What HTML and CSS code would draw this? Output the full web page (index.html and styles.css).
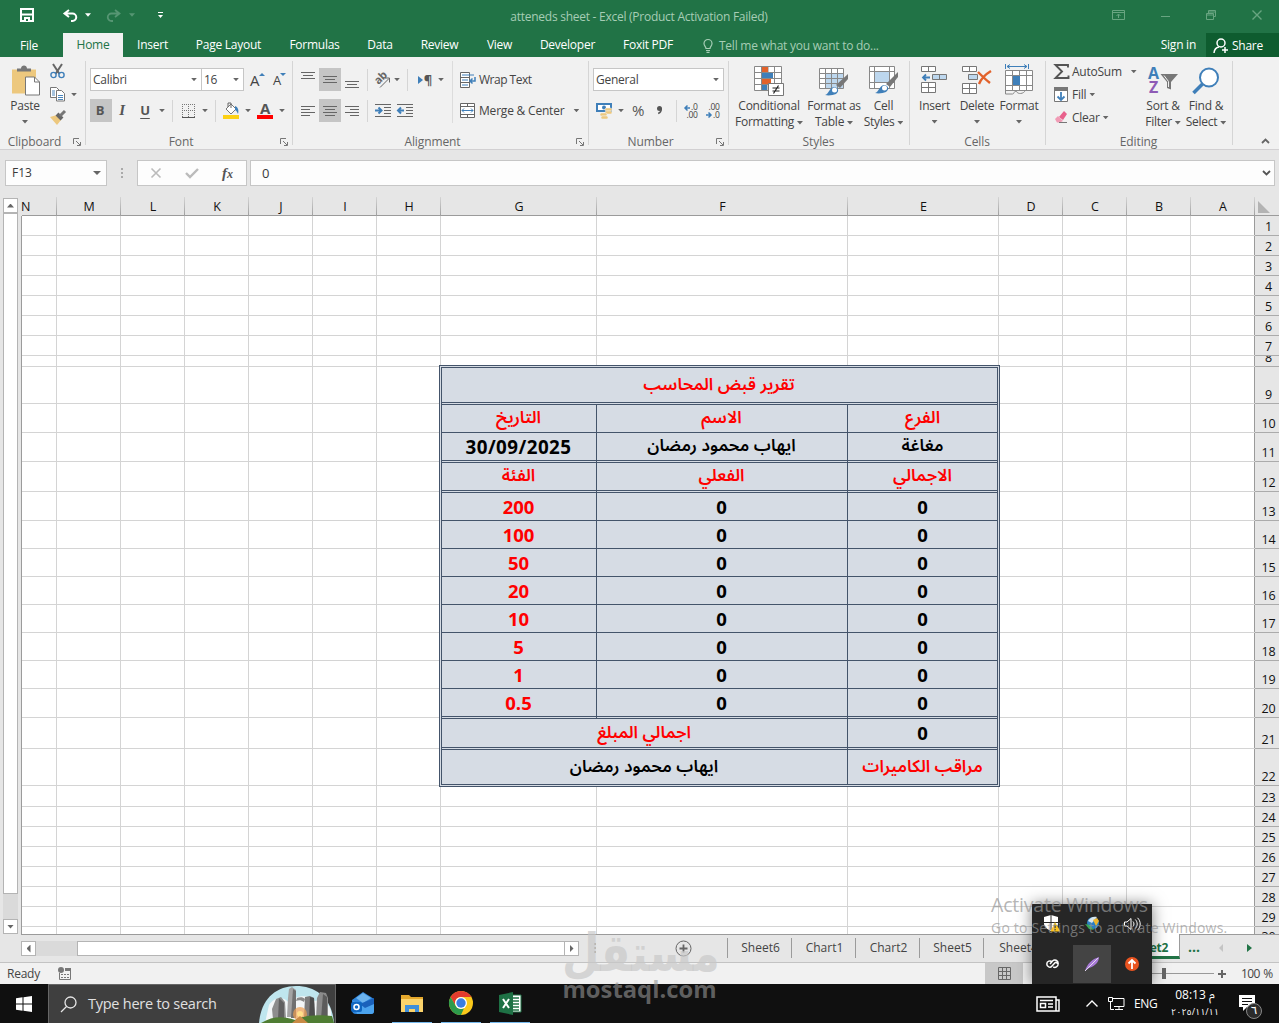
FILE: index.html
```html
<!DOCTYPE html>
<html lang="en">
<head>
  <meta charset="UTF-8" />
  <meta name="viewport" content="width=device-width, initial-scale=1.0"/>
  <title>atteneds sheet - Excel</title>
  <link rel="stylesheet" href="styles.css">
</head>
<body>
<div class="app">

  <!-- title bar -->
  <header class="titlebar">
    <div class="quick">
      <svg width="14" height="14" viewBox="0 0 14 14"><path d="M1 1h12v12H1z" fill="none" stroke="#fff" stroke-width="2"/><path d="M2 6.500h10" stroke="#fff" stroke-width="2"/><path d="M4 9h6v4H4z" fill="#fff"/><path d="M6 11h2v2H6z" fill="#217346"/></svg>
      <svg class="undo" width="15" height="13" viewBox="0 0 15 13"><path d="M6 1L1.500 4.500L6 8M2 4.500h7.500a3.500 3.500 0 0 1 0 7.500H8" fill="none" stroke="#fff" stroke-width="2"/></svg>
      <i class="caret white"></i>
      <svg class="redo" width="15" height="13" viewBox="0 0 15 13"><path d="M9 1l4.500 3.500L9 8M13 4.500H5.500a3.500 3.500 0 0 0 0 7.500H7" fill="none" stroke="#569673" stroke-width="1.800"/></svg>
      <i class="caret faded"></i>
      <svg class="more" width="5" height="6" viewBox="0 0 5 6"><path d="M0 0.500h5" stroke="#fff"/><path d="M0 3h5L2.500 6z" fill="#fff"/></svg>
    </div>
    <div class="doc-title">atteneds sheet - Excel (Product Activation Failed)</div>
    <div class="win-buttons">
      <svg width="13" height="10" viewBox="0 0 13 10" fill="none" stroke="#68a581"><path d="M.5.5h12v9H.5zM.5 2.500h12M6.500 8V4.500M4.500 6l2-2 2 2"/></svg>
      <svg width="9" height="10" viewBox="0 0 9 10"><path d="M0 6.500h9" stroke="#68a581"/></svg>
      <svg width="10" height="10" viewBox="0 0 10 10" fill="none" stroke="#68a581"><path d="M.5 3.500h7v6h-7zM.5 5h7M2.500 3V.500h7v6H8M2.500 2h7"/></svg>
      <svg width="10" height="10" viewBox="0 0 10 10"><path d="M.5.5l9 9M9.500.5l-9 9" stroke="#68a581" stroke-width="1.400"/></svg>
    </div>
  </header>

  <nav class="tabs">
    <span class="file">File</span>
    <span class="active">Home</span>
    <span>Insert</span>
    <span>Page Layout</span>
    <span>Formulas</span>
    <span>Data</span>
    <span>Review</span>
    <span>View</span>
    <span>Developer</span>
    <span>Foxit PDF</span>
    <span class="tell">
      <svg width="10" height="14" viewBox="0 0 10 14" fill="none" stroke="#a6cdb5" stroke-width="1.200"><path d="M3 9.500C3 7.500 1 7 1 4.500a4 4 0 0 1 8 0C9 7 7 7.500 7 9.500zM3 11.500h4M3.500 13.300h3"/></svg>
      Tell me what you want to do...
    </span>
    <span class="signin">Sign in</span>
    <span class="share">
      <svg width="16" height="16" viewBox="0 0 16 16" fill="none" stroke="#fff" stroke-width="1.500"><circle cx="8" cy="5" r="4"/><path d="M1 15c.3-3.500 2-5.500 5-6M9 12h6M12 9v6"/></svg>
      Share
    </span>
  </nav>

  <!-- ribbon -->
  <section class="ribbon">
    <div class="group g-clipboard">
      <div class="body">
        <div class="big">
          <svg width="30" height="31" viewBox="0 0 30 31"><path d="M2 4h24v24H2z" fill="#edc87e"/><path d="M7 6V3h4c0-4 6-4 6 0h4v3z" fill="#777"/><path d="M15.500 11.500h9l5 5v13h-14z" fill="#fff" stroke="#777"/><path d="M24.500 11.500v5h5" fill="none" stroke="#777"/></svg>
          <span>Paste</span>
          <i class="caret"></i>
        </div>
        <div class="clip-tools">
          <svg width="15" height="16" viewBox="0 0 15 16"><path d="M3 1l6.500 10M12 1L5.500 11" stroke="#666" stroke-width="2"/><g fill="none" stroke="#3f7fb9" stroke-width="1.400"><circle cx="3.500" cy="12" r="2.600"/><circle cx="11.500" cy="12" r="2.600"/></g></svg>
          <div class="pair">
            <svg width="15" height="15" viewBox="0 0 15 15"><g fill="#fff" stroke="#777"><path d="M.5.5h6l3 3v7h-9z"/><path d="M6.500 3.500h5l3 3v7.500h-8z"/></g><path d="M2 4h3M2 6h3M2 8h3M8 8.500h5M8 10.500h5M8 12.500h5" stroke="#4a86bd"/></svg>
            <i class="caret"></i>
          </div>
          <svg width="17" height="15" viewBox="0 0 17 15"><path d="M0 7l7-2 4 5-4 5z" fill="#edc87e"/><path d="M7 4l5 5" stroke="#666" stroke-width="4"/><path d="M10 6l5-5" stroke="#777" stroke-width="3"/></svg>
        </div>
      </div>
      <div class="label">Clipboard</div>
      <svg class="launch" width="8" height="8" viewBox="0 0 8 8" fill="none" stroke="#777"><path d="M.5 6V.5H6M3 3l4 4M7.500 4v3.500H4"/></svg>
    </div>

    <div class="group g-font">
      <div class="row r1">
        <div class="combo name">Calibri<i class="caret"></i></div>
        <div class="combo size">16<i class="caret"></i></div>
        <div class="grow">A<svg width="6" height="3" viewBox="0 0 6 3"><path d="M0 3l3-3 3 3z" fill="#3f7fb9"/></svg></div>
        <div class="grow shrink">A<svg width="6" height="3" viewBox="0 0 6 3"><path d="M0 0h6L3 3z" fill="#3f7fb9"/></svg></div>
      </div>
      <div class="row r2">
        <div class="tool on"><b>B</b></div>
        <div class="tool italic">I</div>
        <div class="tool under">U</div>
        <div class="drop"><i class="caret"></i></div>
        <div class="sep"></div>
        <div class="tool"><svg width="13" height="14" viewBox="0 0 13 14"><path d="M.5 0v13M6.500 0v13M12.500 0v13M0 .5h13M0 6.500h13" stroke="#777" stroke-dasharray="1 1"/><path d="M0 13.500h13" stroke="#555"/></svg></div>
        <div class="drop"><i class="caret"></i></div>
        <div class="sep"></div>
        <div class="tool"><svg width="17" height="17" viewBox="0 0 17 17"><path d="M3 7l5-5 5 5-5 5z" fill="#fff" stroke="#777"/><path d="M5 5V1h3v5" fill="none" stroke="#666"/><path d="M12 4c3 1 4 4 3 8-1-2-1-3-3-4z" fill="#3f7fb9"/><path d="M0 13h16v4H0z" fill="#fcd116"/></svg></div>
        <div class="drop"><i class="caret"></i></div>
        <div class="tool fontcolor">A</div>
        <div class="drop"><i class="caret"></i></div>
      </div>
      <div class="label">Font</div>
      <svg class="launch" width="8" height="8" viewBox="0 0 8 8" fill="none" stroke="#777"><path d="M.5 6V.5H6M3 3l4 4M7.500 4v3.500H4"/></svg>
    </div>

    <div class="group g-align">
      <div class="split">
        <div class="align-left">
          <div class="row r1">
            <div class="tool"><svg width="14" height="16" viewBox="0 0 14 16" stroke="#666"><path d="M0 .5h14M2 3.500h10M0 6.500h14"/></svg></div>
            <div class="tool on"><svg width="14" height="16" viewBox="0 0 14 16" stroke="#666"><path d="M0 4.500h14M2 7.500h10M0 10.500h14"/></svg></div>
            <div class="tool"><svg width="14" height="16" viewBox="0 0 14 16" stroke="#666"><path d="M0 9.500h14M2 12.500h10M0 15.500h14"/></svg></div>
            <div class="sep"></div>
            <div class="tool narrow"><svg width="17" height="16" viewBox="0 0 17 16"><text transform="translate(5.500 13) rotate(-45)" class="ab">ab</text><path d="M7 15.500l9-9M12 6h4.500v4.500" fill="none" stroke="#666"/></svg></div>
            <div class="drop"><i class="caret"></i></div>
            <div class="sep"></div>
            <div class="tool pilcrow"><svg width="5" height="8" viewBox="0 0 5 8"><path d="M0 0l5 4-5 4z" fill="#3f7fb9"/></svg>¶</div>
            <div class="drop"><i class="caret"></i></div>
          </div>
          <div class="row r2">
            <div class="tool"><svg width="14" height="12" viewBox="0 0 14 12" stroke="#666"><path d="M0 1.500h14M0 4.500h9M0 7.500h14M0 10.500h9"/></svg></div>
            <div class="tool on"><svg width="14" height="12" viewBox="0 0 14 12" stroke="#666"><path d="M0 1.500h14M2 4.500h10M0 7.500h14M2 10.500h10"/></svg></div>
            <div class="tool"><svg width="14" height="12" viewBox="0 0 14 12" stroke="#666"><path d="M0 1.500h14M5 4.500h9M0 7.500h14M5 10.500h9"/></svg></div>
            <div class="sep"></div>
            <div class="tool"><svg width="16" height="13" viewBox="0 0 16 13"><path d="M0 .5h16M9 3.500h7M9 6.500h7M9 9.500h7M0 12.500h16" stroke="#666"/><path d="M0 6.500h6M3.500 3.500l3 3-3 3" fill="none" stroke="#3f7fb9" stroke-width="2"/></svg></div>
            <div class="tool"><svg width="16" height="13" viewBox="0 0 16 13"><path d="M0 .5h16M9 3.500h7M9 6.500h7M9 9.500h7M0 12.500h16" stroke="#666"/><path d="M1 6.500h6M4 3.500l-3 3 3 3" fill="none" stroke="#3f7fb9" stroke-width="2"/></svg></div>
          </div>
        </div>
        <div class="align-right">
          <div class="row r1">
            <svg width="16" height="16" viewBox="0 0 16 16"><path d="M.5.5h9v15h-9zM.5 5.500h9M.5 10.500h9" fill="#fff" stroke="#666"/><path d="M2 3h12M2 8h6M2 13h6" stroke="#3f7fb9"/><path d="M15 5v4h-5M12.500 6.500L10 9l2.500 2.500" fill="none" stroke="#3f7fb9" stroke-width="1.500"/></svg>
            <span>Wrap Text</span>
          </div>
          <div class="row r2">
            <svg width="15" height="15" viewBox="0 0 15 15"><path d="M.5.5h14v14H.5zM.5 3.500h14M.5 11.500h14M7.500 0v3.500M7.500 11.500V15" fill="#fff" stroke="#666"/><path d="M2 7.500h11M4 5.500l-2 2 2 2M11 5.500l2 2-2 2" fill="none" stroke="#3f7fb9"/></svg>
            <span class="merge">Merge &amp; Center</span>
            <i class="caret"></i>
          </div>
        </div>
      </div>
      <div class="label">Alignment</div>
      <svg class="launch" width="8" height="8" viewBox="0 0 8 8" fill="none" stroke="#777"><path d="M.5 6V.5H6M3 3l4 4M7.500 4v3.500H4"/></svg>
    </div>

    <div class="group g-number">
      <div class="row r1"><div class="combo fmt">General<i class="caret"></i></div></div>
      <div class="row r2">
        <div class="tool money"><svg width="17" height="16" viewBox="0 0 17 16"><path d="M1 1h14v7H1z" fill="#fff" stroke="#3f7fb9" stroke-width="2"/><circle cx="8" cy="4.500" r="2" fill="#3f7fb9"/><g fill="#edc87e" stroke="#f1f1f1" stroke-width=".5"><rect x="9" y="5" width="7" height="3" rx="1.500"/><rect x="9" y="8" width="7" height="3" rx="1.500"/><rect x="4" y="10" width="7" height="3" rx="1.500"/><rect x="5" y="13" width="7" height="3" rx="1.500"/></g></svg></div>
        <div class="drop"><i class="caret"></i></div>
        <div class="tool pct">%</div>
        <div class="tool"><svg width="6" height="9" viewBox="0 0 6 9"><circle cx="2.500" cy="2.500" r="2.500" fill="#555"/><path d="M4.200 2.500c.3 2.500-.7 4-3 5" fill="none" stroke="#555" stroke-width="1.400"/></svg></div>
        <div class="sep"></div>
        <div class="tool"><svg class="dec" width="15" height="14" viewBox="0 0 15 14"><text x="7" y="6">.0</text><text x="2.500" y="14">.00</text><path d="M1 4h5M3.500 1.500L1 4l2.500 2.500" fill="none" stroke="#3f7fb9" stroke-width="1.500"/></svg></div>
        <div class="tool"><svg class="dec" width="15" height="14" viewBox="0 0 15 14"><text x="2.500" y="6">.00</text><text x="7" y="14">.0</text><path d="M0 11h5M2.500 8.500L5 11l-2.500 2.500" fill="none" stroke="#3f7fb9" stroke-width="1.500"/></svg></div>
      </div>
      <div class="label">Number</div>
      <svg class="launch" width="8" height="8" viewBox="0 0 8 8" fill="none" stroke="#777"><path d="M.5 6V.5H6M3 3l4 4M7.500 4v3.500H4"/></svg>
    </div>

    <div class="group g-styles">
      <div class="body">
        <div class="big">
          <svg width="30" height="30" viewBox="0 0 30 30"><path d="M.5.5h27v24H.5z" fill="#fff"/><path d="M.5.5h27v24H.5zM7.500.5v24M14 .5v24M20.500.5v24M.5 6.500h27M.5 12.500h27M.5 18.500h27" fill="none" stroke="#888"/><path d="M8 1h6v5H8zM8 13h9v5H8z" fill="#e2622b"/><path d="M8 7h11v5H8zM8 19h5v5H8z" fill="#3f7fb9"/><path d="M14.500 17.500h15v12h-15z" fill="#fff" stroke="#777"/><path d="M18.500 22h7M18.500 25h7M24.500 19.500l-5 8" stroke="#222" stroke-width="1.200"/></svg>
          <span>Conditional</span>
          <span>Formatting <i class="caret"></i></span>
        </div>
        <div class="big">
          <svg width="30" height="30" viewBox="0 0 30 30"><path d="M.5 2.500h24v20H.5z" fill="#fff"/><path d="M6 8h18v14H6z" fill="#bdd7ee"/><path d="M.5 2.500h24v20H.5zM6.500 2.500v20M12.500 2.500v20M18.500 2.500v20M.5 7.500h24M.5 12.500h24M.5 17.500h24" fill="none" stroke="#888"/><path d="M29 8v5l-8 9-4-3z" fill="#777"/><path d="M6 29c4-1 4-7 9-8 4 0 6 4 2 7-3 1-7 2-11 1z" fill="#3f7fb9"/><circle cx="15.500" cy="24" r="2.500" fill="#fff"/></svg>
          <span>Format as</span>
          <span>Table <i class="caret"></i></span>
        </div>
        <div class="big">
          <svg width="30" height="30" viewBox="0 0 30 30"><path d="M.5.5h25v22H.5z" fill="#fff"/><path d="M6 5h14v11H6z" fill="#bdd7ee"/><path d="M.5.5h25v22H.5zM5.500.5v22M20.500.5v22M.5 5.500h25M.5 16.500h25" fill="none" stroke="#888"/><path d="M29 6v5l-8 10-4-3z" fill="#777"/><path d="M6 27c4-1 4-7 9-8 4 0 6 4 2 7-3 1-7 2-11 1z" fill="#3f7fb9"/><circle cx="15.500" cy="22" r="2.500" fill="#fff"/></svg>
          <span>Cell</span>
          <span>Styles <i class="caret"></i></span>
        </div>
      </div>
      <div class="label">Styles</div>
    </div>

    <div class="group g-cells">
      <div class="body">
        <div class="big">
          <svg width="27" height="30" viewBox="0 0 27 30"><g fill="#fff" stroke="#777"><path d="M.5.5h14v5H.5zM7.500.5v5M.5 16.500h14v10H.5zM7.500 16.500v10M.5 21.500h14"/><path d="M11.500 8.500h14v5h-14z" fill="#bdd7ee"/><path d="M18.500 8.500v5"/></g><path d="M2 11.500h7M5 8.500l-3 3 3 3" fill="none" stroke="#3f7fb9" stroke-width="1.800"/></svg>
          <span>Insert</span>
          <i class="caret"></i>
        </div>
        <div class="big">
          <svg width="30" height="30" viewBox="0 0 30 30"><g fill="#fff" stroke="#777"><path d="M.5.500h14v5H.5zM7.500.5v5M.5 17.500h14v10H.5zM7.500 17.500v10M.5 22.500h14"/><path d="M6.500 8.500h9v5h-9z" fill="#bdd7ee"/></g><path d="M16 6c3 3 8 8 12 11M29 5c-5 3-10 8-12 13" fill="none" stroke="#e2622b" stroke-width="2.400"/></svg>
          <span>Delete</span>
          <i class="caret"></i>
        </div>
        <div class="big">
          <svg width="29" height="32" viewBox="0 0 29 32"><path d="M.5 0v5M23.500 0v5M2 2.500h20M5 .5l-3 2 3 2M19 .5l3 2-3 2" fill="none" stroke="#3f7fb9"/><path d="M.5 6.500h27v20H.5z" fill="#fff"/><path d="M.5 26v4h7c2 0 1-3 4-3 0 3 7 4 9-1M.5 6.500h27v20H.5zM7.500 6.500v20M14.500 6.500v20M21.500 6.500v20M.5 11.500h27M.5 21.500h27" fill="none" stroke="#888"/><path d="M8 12h7v9H8z" fill="#3f7fb9"/></svg>
          <span>Format</span>
          <i class="caret"></i>
        </div>
      </div>
      <div class="label">Cells</div>
    </div>

    <div class="group g-edit">
      <div class="body">
        <div class="edit-list">
          <div class="line"><svg width="15" height="15" viewBox="0 0 15 15"><path d="M14 3.500V1H1.500L8 7.500 1.500 14H14.500v-2.500" fill="none" stroke="#555" stroke-width="1.900"/></svg><span>AutoSum</span><i class="caret far"></i></div>
          <div class="line"><svg width="15" height="15" viewBox="0 0 15 15"><path d="M.5.5h13v14H.5z" fill="#fff" stroke="#777"/><path d="M0 0h14v4H0z" fill="#777"/><path d="M7 5v8M3.500 9.500L7 13l3.500-3.500" fill="none" stroke="#3f7fb9" stroke-width="1.800"/></svg><span>Fill</span><i class="caret"></i></div>
          <div class="line"><svg width="15" height="15" viewBox="0 0 15 15"><path d="M5 7l5-6 3 3-4 6z" fill="#e8618c"/><path d="M1 9l3-3 5 5-3 1.500H3z" fill="#f19bb5"/><path d="M5 12.500h8" stroke="#777"/></svg><span>Clear</span><i class="caret"></i></div>
        </div>
        <div class="big sort">
          <svg width="30" height="30" viewBox="0 0 30 30"><text x="0" y="12.500" class="az-a">A</text><text x="1" y="27" class="az-z">Z</text><path d="M12.500 8H30l-7 8v7.500l-4-1.500v-6z" fill="#777"/><path d="M16 9.500l4.500 6V21" fill="none" stroke="#f1f1f1"/></svg>
          <span>Sort &amp;</span>
          <span>Filter <i class="caret"></i></span>
        </div>
        <div class="big">
          <svg width="28" height="28" viewBox="0 0 28 28"><circle cx="17" cy="10.500" r="9" fill="#fff" stroke="#3f7fb9" stroke-width="2"/><path d="M10.500 17L1.500 26" stroke="#3f7fb9" stroke-width="3.500"/></svg>
          <span>Find &amp;</span>
          <span>Select <i class="caret"></i></span>
        </div>
      </div>
      <div class="label">Editing</div>
    </div>
    <svg class="collapse" width="9" height="6" viewBox="0 0 9 6"><path d="M1 5l3.500-3.500L8 5" fill="none" stroke="#666" stroke-width="1.800"/></svg>
  </section>

  <!-- formula bar -->
  <section class="formula">
    <div class="namebox">F13<i class="caret wide"></i></div>
    <div class="grip"></div>
    <div class="fx">
      <svg width="12" height="12" viewBox="0 0 12 12"><path d="M1.500 1.500l9 9M10.500 1.500l-9 9" stroke="#bbb" stroke-width="1.600"/></svg>
      <svg width="14" height="12" viewBox="0 0 14 12"><path d="M1 6l4 4 8-8" fill="none" stroke="#bbb" stroke-width="2.400"/></svg>
      <span><em>f</em>x</span>
    </div>
    <div class="value">0<svg width="9" height="6" viewBox="0 0 9 6"><path d="M1 1l3.500 3.500L8 1" fill="none" stroke="#555" stroke-width="1.800"/></svg></div>
  </section>

  <!-- worksheet, right to left -->
  <main class="work">
    <div class="vscroll">
      <div class="sbtn"><i class="caret up"></i></div>
      <div class="thumb"></div>
      <div class="track"></div>
      <div class="sbtn"><i class="caret"></i></div>
    </div>
    <div class="sheet">
      <div class="heads">
        <span class="cut">N</span><span>M</span><span>L</span><span>K</span><span>J</span><span>I</span><span>H</span><span>G</span><span>F</span><span>E</span><span>D</span><span>C</span><span>B</span><span>A</span>
        <svg class="corner" width="12" height="12" viewBox="0 0 12 12"><path d="M0 0v12h12z" fill="#b3b3b3"/></svg>
      </div>
      <div class="cells">
        <div class="cols"><i></i><i></i><i></i><i></i><i></i><i></i><i></i><i></i><i></i><i></i><i></i><i></i><i></i><i class="last"></i></div>
        <div class="rows">
          <div><b>1</b></div><div><b>2</b></div><div><b>3</b></div><div><b>4</b></div><div><b>5</b></div><div><b>6</b></div><div><b>7</b></div>
          <div class="h11"><b>8</b></div><div class="h37"><b>9</b></div><div class="h29"><b>10</b></div><div class="h29"><b>11</b></div><div class="h30"><b>12</b></div><div class="h29"><b>13</b></div>
          <div class="h28"><b>14</b></div><div class="h28"><b>15</b></div><div class="h28"><b>16</b></div><div class="h28"><b>17</b></div><div class="h28"><b>18</b></div><div class="h28"><b>19</b></div>
          <div class="h29"><b>20</b></div><div class="h31"><b>21</b></div><div class="h37"><b>22</b></div><div class="h21"><b>23</b></div>
          <div><b>24</b></div><div><b>25</b></div><div><b>26</b></div><div><b>27</b></div><div><b>28</b></div><div><b>29</b></div><div class="part"><b>30</b></div>
        </div>
        <div class="report">
          <div class="red dbl all" lang="ar">تقرير قبض المحاسب</div>
          <div class="red" lang="ar">التاريخ</div><div class="red" lang="ar">الاسم</div><div class="red end" lang="ar">الفرع</div>
          <div class="dbl date">30/09/2025</div><div class="dbl" lang="ar">ايهاب محمود رمضان</div><div class="dbl end" lang="ar">مغاغة</div>
          <div class="red dbl" lang="ar">الفئة</div><div class="red dbl" lang="ar">الفعلي</div><div class="red dbl end" lang="ar">الاجمالي</div>
          <div class="red">200</div><div>0</div><div class="end">0</div>
          <div class="red">100</div><div>0</div><div class="end">0</div>
          <div class="red">50</div><div>0</div><div class="end">0</div>
          <div class="red">20</div><div>0</div><div class="end">0</div>
          <div class="red">10</div><div>0</div><div class="end">0</div>
          <div class="red">5</div><div>0</div><div class="end">0</div>
          <div class="red">1</div><div>0</div><div class="end">0</div>
          <div class="red dbl">0.5</div><div class="dbl">0</div><div class="dbl end">0</div>
          <div class="red dbl two" lang="ar">اجمالي المبلغ</div><div class="dbl end">0</div>
          <div class="two foot" lang="ar">ايهاب محمود رمضان</div><div class="red end foot" lang="ar">مراقب الكاميرات</div>
        </div>
      </div>
    </div>
  </main>

  <!-- sheet tabs and horizontal scroll -->
  <section class="sheetbar">
    <div class="hscroll">
      <div class="sbtn"><i class="tri left"></i></div>
      <div class="track"></div>
      <div class="thumb"></div>
      <div class="sbtn"><i class="tri right"></i></div>
    </div>
    <div class="grip"></div>
    <div class="add"><svg width="17" height="17" viewBox="0 0 17 17" fill="none" stroke="#666"><circle cx="8.500" cy="8.500" r="7.500"/><path d="M8.500 4.500v8M4.500 8.500h8" stroke-width="1.800"/></svg></div>
    <div class="sheets">
      <span>Sheet6</span><span>Chart1</span><span>Chart2</span><span>Sheet5</span><span class="under-tray">Sheet4</span><span>Sheet3</span><span class="current">Sheet2</span>
    </div>
    <span class="dots">...</span>
    <i class="tri left dim"></i>
    <i class="tri right green"></i>
  </section>

  <footer class="status">
    <span class="ready">Ready</span>
    <svg width="13" height="13" viewBox="0 0 13 13"><circle cx="3" cy="3" r="3" fill="#777"/><path d="M7 1h6v3H7z" fill="#777"/><path d="M1.500 6v6.500h11V3" fill="none" stroke="#777"/><path d="M3 7.500h8M3 10.500h8" stroke="#777" stroke-dasharray="2 1"/></svg>
    <div class="view"><svg width="13" height="13" viewBox="0 0 13 13"><path d="M.5.5h12v12H.5zM4.500 0v13M8.500 0v13M0 4.500h13M0 8.500h13" fill="none" stroke="#666"/></svg></div>
    <div class="zoom"><i></i></div>
    <svg class="plus" width="8" height="8" viewBox="0 0 8 8"><path d="M4 0v8M0 4h8" stroke="#666" stroke-width="2"/></svg>
    <span class="percent">100 %</span>
  </footer>

  <!-- taskbar -->
  <footer class="taskbar">
    <div class="start"><svg width="16" height="16" viewBox="0 0 16 16" fill="#fff"><path d="M0 2.300L6.500 1.300V7.500H0zM7.500 1.200L16 0v7.500H7.500zM0 8.500h6.500v6.200L0 13.700zM7.500 8.500H16V16l-8.500-1.200z"/></svg></div>
    <div class="search">
      <svg width="17" height="17" viewBox="0 0 17 17" fill="none" stroke="#e6e6e6" stroke-width="1.300"><circle cx="10.500" cy="6.500" r="5.500"/><path d="M6.500 10.500L1 16"/></svg>
      <span>Type here to search</span>
      <svg class="castle" width="76" height="38" viewBox="0 0 76 38">
        <path d="M0 38C2 14 17 1 37 1s36 12 38 37z" fill="#bfe6ee"/>
        <path d="M10 20c6-9 16-8 20-2 8-9 20-8 26-2 8-2 14 3 16 10v12H6z" fill="#f2f6f7"/>
        <path d="M14 34l-1-10 4-10 5-2 4 5 1 17z" fill="#8d8d8d"/><path d="M20 13l5 5v16h-6z" fill="#606060"/>
        <path d="M28 32l1-19 1-9 3-2 4 3v27z" fill="#a3a3a3"/><path d="M34 4l3 2v27h-5z" fill="#707070"/>
        <path d="M38 13c3-1 6-1 8 1l-1 3c-3-2-5-2-8-1z" fill="#8a8a8a"/>
        <path d="M45 33l1-21 5-1 4 2 1 20z" fill="#7c7c7c"/><path d="M51 12l4 1 1 20h-6z" fill="#4d4d4d"/>
        <path d="M57 34l1-21 3-6 6 1 2 5v21z" fill="#8b8b8b"/><path d="M64 9l4 3v22h-6z" fill="#5c5c5c"/>
        <circle cx="41" cy="29" r="7" fill="#f0a050" opacity=".7"/><circle cx="41" cy="29" r="3" fill="#ffe08a"/>
        <path d="M2 38c12-7 22-7 34-3 12-6 26-5 37-4l2 7z" fill="#4f7d33"/><path d="M33 38l8-7 8 7z" fill="#c98a45"/>
      </svg>
    </div>
    <div class="apps">
      <div><svg width="24" height="23" viewBox="0 0 24 23"><path d="M1 8L12 0l11 7v12a3 3 0 0 1-3 3H5a4 4 0 0 1-4-4z" fill="#2f86dc"/><path d="M5 6l7-5 8 5-8 5z" fill="#6db4ee"/><path d="M2 9l10 5 11-6v11a3 3 0 0 1-3 3H6z" fill="#4ba3ee"/><path d="M9 12l14-6v6l-9 4z" fill="#1a61bb"/><rect y="10" width="11" height="10" rx="2" fill="#1066c0"/><circle cx="5.500" cy="15" r="2.500" fill="none" stroke="#fff" stroke-width="1.500"/></svg></div>
      <div class="open"><svg width="22" height="19" viewBox="0 0 22 19"><path d="M0 1h8l2 2h12v15H0z" fill="#e5a82c"/><path d="M0 5h22v13H0z" fill="#fbd36b"/><path d="M4 18v-7h14v7h-4v-3H8v3z" fill="#3f8fdb"/></svg></div>
      <div class="open"><svg width="24" height="24" viewBox="0 0 24 24"><circle cx="12" cy="12" r="12" fill="#fbc91b"/><path d="M1.600 6A12 12 0 0 1 22.400 6H12a6 6 0 0 0-5.500 8.500z" fill="#e33b2e"/><path d="M1.600 6l5.200 9A6 6 0 0 0 15 17.200L12 24A12 12 0 0 1 1.600 6z" fill="#2d9b4c"/><circle cx="12" cy="12" r="6" fill="#fff"/><circle cx="12" cy="12" r="4.700" fill="#3a7de0"/></svg></div>
      <div class="open"><svg width="23" height="23" viewBox="0 0 23 23"><path d="M12 3h10v17H12z" fill="#fff" stroke="#217346"/><path d="M14 6h6M14 9h6M14 12h6M14 15h6M14 18h6" stroke="#217346" stroke-width="1.500"/><path d="M0 3l14-3v23L0 20z" fill="#1e7145"/><path d="M4 7l6 9M10 7l-6 9" stroke="#fff" stroke-width="2"/></svg></div>
    </div>
    <div class="tray">
      <svg width="24" height="16" viewBox="0 0 24 16" fill="none" stroke="#fff" stroke-width="1.500"><path d="M1 1h19v14H1zM20 4h3v11h-4M4 4.500h13M12 8h5M12 11h5"/><path d="M4.500 7.500h5v4h-5z"/></svg>
      <svg class="chev" width="12" height="7" viewBox="0 0 12 7"><path d="M.5 6.500L6 1l5.500 5.500" fill="none" stroke="#fff" stroke-width="1.400"/></svg>
      <svg class="net" width="17" height="14" viewBox="0 0 17 14" fill="none" stroke="#fff"><path d="M5 1.500h11v8H6M11 9.500v3M7 12.500h8M.5.5h4v4h-4zM2.500 5v7.500H6"/></svg>
      <span class="lang">ENG</span>
      <div class="clock"><span>08:13 <bdi lang="ar">م</bdi></span><span class="day" lang="ar">٢٠٢٥/١١/١١</span></div>
      <div class="note"><svg width="17" height="17" viewBox="0 0 17 17"><path d="M0 0h16v12H8l-4 4v-4H0z" fill="#fff"/><path d="M3 3.500h10M3 6.500h10M3 9.500h6" stroke="#111"/></svg><span class="badge">٦</span></div>
    </div>
  </footer>

  <div class="popup">
    <div><svg width="17" height="18" viewBox="0 0 17 18"><path d="M0 2l7-2 7 2v6c0 4-3 6-7 8-4-2-7-4-7-8z" fill="#fff"/><path d="M7 0v15M0 7.500h14" stroke="#262626"/><path d="M11 7l5.500 9.500h-10z" fill="#fcc419"/><path d="M11 10v3M11 14v1.200" stroke="#222" stroke-width="1.200"/></svg></div>
    <div><svg width="16" height="16" viewBox="0 0 16 16"><circle cx="9" cy="7" r="6" fill="#2b7fc2"/><path d="M4 5c2-4 6-5 9-4L8 7z" fill="#d7e6ee"/><path d="M9 4l4-2 2 3-3 5z" fill="#efb52b"/><path d="M1 8l5 1 4 5-5-1z" fill="#3aa655"/></svg></div>
    <div><svg width="17" height="14" viewBox="0 0 17 14" fill="none" stroke="#fff"><path d="M.5 5h2.500l4-3.500v11L3 9H.5zM9 4.500c1.300 1.500 1.300 3.500 0 5M11.300 2.500c2.500 2.700 2.500 6.300 0 9M13.500.8c3.600 3.500 3.600 8.900 0 12.400"/></svg></div>
    <div><svg width="13" height="10" viewBox="0 0 13 10" fill="none" stroke="#fff" stroke-width="1.500"><path d="M6 3C4.500 1 .8 2 .8 5s3.500 4 5 2.200L9 3.800C10 2.800 11.500 3.800 11.200 5M4 5l2.500-3C8.500 0 12.200 1 12.200 4.500s-3 4.500-5 3.500"/></svg></div>
    <div class="hover"><svg width="16" height="16" viewBox="0 0 16 16"><path d="M1 15C3 8 8 3 15 1c0 5-4 9-10 11z" fill="#a87bd8"/><path d="M1 15L14 2" stroke="#e4d8f0"/></svg></div>
    <div><svg width="14" height="14" viewBox="0 0 14 14"><circle cx="7" cy="7" r="7" fill="#e95420"/><path d="M7 12V3M3.500 6.500L7 3l3.500 3.500" fill="none" stroke="#fff" stroke-width="1.800"/></svg></div>
  </div>

  <div class="activate"><strong>Activate Windows</strong><span>Go to Settings to activate Windows.</span></div>
  <div class="mark"><span class="mark-ar" lang="ar">مستقل</span><span class="mark-en">mostaql.com</span></div>
</div>
</body>
</html>
```
FILE: styles.css
```css
* { box-sizing: border-box; }
body { margin: 0; font-family: "Open Sans", "Noto Sans", sans-serif; font-size: 12px; color: #444; }
svg { display: block; flex: none; overflow: visible; }
.app { position: relative; width: 1279px; height: 1023px; overflow: hidden; display: flex; flex-direction: column; background: #e6e6e6; white-space: nowrap; line-height: 16px; letter-spacing: -0.25px; }

.caret { display: inline-block; flex: none; width: 6px; height: 3.500px; background: #666; clip-path: polygon(0 0, 100% 0, 50% 100%); vertical-align: middle; }
.caret.wide { width: 8px; height: 4px; }
.caret.white { background: #fff; }
.caret.faded { background: #569673; }
.caret.up { width: 7px; height: 4px; clip-path: polygon(0 100%, 100% 100%, 50% 0); }

/* title bar */
.titlebar { height: 33px; background: #217346; display: grid; grid-template-columns: 440px 398px 441px; }
.quick { display: flex; align-items: center; padding: 0 0 3px 20px; }
.undo { margin: 0 7px 0 29px; }
.redo { margin: 0 8px 0 15px; }
.more { margin-left: 23px; }
.doc-title { text-align: center; color: #a6cdb5; padding-top: 9px; letter-spacing: -0.26px; }
.win-buttons { display: flex; align-items: center; padding: 0 17px 3px 0; justify-content: flex-end; gap: 36px; }

.tabs { height: 24px; background: #217346; color: #fff; display: grid; grid-template-columns: 63px 60px 59px 93px 79px 52px 67px 53px 83px 78px 400px 119px 73px; text-align: center; line-height: 24px; }
.tabs .file { padding-right: 5px; line-height: 26px; }
.tabs .active { background: #f1f1f1; color: #217346; }
.tell { display: flex; align-items: center; padding-left: 16px; gap: 6px; color: #a6cdb5; }
.tabs .signin { text-align: right; padding-right: 10px; }
.share { background: #0e5c2f; display: flex; align-items: center; gap: 3px; padding-left: 7px; }

/* ribbon */
.ribbon { height: 93px; background: #f1f1f1; border-bottom: 1px solid #d2d0d2; display: flex; position: relative; }
.group { position: relative; height: 84px; margin-top: 4px; border-right: 1px solid #d5d5d5; }
.label { position: absolute; left: 0; right: 10px; bottom: -5px; text-align: center; color: #666; letter-spacing: -0.1px; }
.launch { position: absolute; right: 4px; bottom: -1px; }
.g-clipboard { width: 86px; }
.g-clipboard .label { right: 16px; }
.g-font { width: 207px; padding-left: 4px; }
.g-font .label { right: 16px; }
.g-align { width: 296px; padding-left: 4px; }
.g-align .label { right: 16px; }
.g-number { width: 140px; padding-left: 4px; }
.g-number .label { right: 16px; }
.g-styles { width: 181px; }
.g-styles .label, .g-cells .label, .g-edit .label { right: 1px; }
.g-cells { width: 136px; }
.g-edit { width: 187px; }
.body { display: flex; }
.row { display: flex; align-items: center; height: 23px; }
.r1 { margin-top: 7px; }
.r2 { margin-top: 8px; }

.big { display: flex; flex-direction: column; align-items: center; height: 68px; padding-top: 4px; }
.big svg { height: 32px; margin-bottom: 1px; }
.big > .caret { margin-top: 6px; }
.g-clipboard .big { width: 50px; }
.clip-tools { display: flex; flex-direction: column; gap: 8px; padding-top: 2px; }
.pair { display: flex; align-items: center; gap: 6px; }
.g-styles .big:nth-child(1) { width: 80px; }
.g-styles .big:nth-child(2) { width: 50px; }
.g-styles .big:nth-child(3) { width: 49px; }
.g-cells .big:nth-child(1) { width: 49px; }
.g-cells .big:nth-child(2) { width: 36px; }
.g-cells .big:nth-child(3) { width: 48px; padding-top: 3px; }
.g-cells .big:nth-child(3) svg { margin-bottom: 2px; }

.combo { flex: none; height: 23px; background: #fff; border: 1px solid #c6c6c6; display: flex; align-items: center; justify-content: space-between; padding: 0 4px 0 2px; }
.combo.name { width: 112px; }
.combo.size { width: 43px; margin-left: -1px; }
.combo.fmt { width: 131px; }
.grow { flex: none; font-size: 15px; display: flex; width: 17px; margin-left: 6px; letter-spacing: 0; }
.grow svg { margin-top: 1px; margin-left: -1px; }
.grow.shrink { font-size: 13px; margin-left: 6px; }
.tool { width: 22px; height: 23px; display: flex; align-items: center; justify-content: center; font-size: 14px; color: #555; }
.tool.on { background: #c5c5c5; }
.tool.narrow { width: 19px; }
.italic { font: italic bold 15px "Liberation Serif", serif; padding-right: 2px; }
.under { font-weight: bold; font-size: 13px; text-decoration: underline; text-underline-offset: 3px; padding-bottom: 2px; }
.tool b { font-size: 13px; padding: 0 2px 2px 0; }
.fontcolor { font-weight: bold; font-size: 15px; line-height: 13px; height: 17px; background: linear-gradient(#f00, #f00) 3px 100% / 16px 4px no-repeat; align-items: flex-start; }
.drop { width: 12px; display: flex; justify-content: center; }
.sep { width: 1px; height: 22px; margin: 0 4px; background: #d5d5d5; }
.ab { font: bold 11px "Open Sans", sans-serif; fill: #666; }
.pilcrow { gap: 1px; font-weight: bold; font-size: 13px; margin-left: 2px; margin-right: -1px; }
.split { display: flex; }
.align-left { width: 156px; border-right: 1px solid #dcdcdc; height: 62px; }
.align-right { padding-left: 7px; }
.align-right .row { gap: 3px; }
.align-right .r1 { letter-spacing: -0.5px; }
.align-right .r2 { gap: 4px; }
.merge { letter-spacing: -0.2px; }
.align-right .caret { margin-left: 5px; }
.pct { font-size: 15px; padding-bottom: 2px; }
.g-number .sep { margin: 0 3px 0 5px; }
.dec text { font: 8.500px "Open Sans", sans-serif; fill: #444; }

.edit-list { width: 94px; padding: 1px 0 0 8px; }
.line { height: 23px; display: flex; align-items: center; gap: 3px; padding-bottom: 4px; }
.caret.far { margin-left: 6px; }
.sort { width: 46px; }
.g-edit .big:last-child { width: 40px; }
.az-a { font: bold 16px "Open Sans", sans-serif; fill: #3f7fb9; }
.az-z { font: bold 16px "Open Sans", sans-serif; fill: #8e5bb5; }
.collapse { position: absolute; right: 9px; bottom: 5px; }

/* formula bar */
.formula { height: 47px; padding: 10px 4px 0 5px; display: flex; align-items: flex-start; color: #3a3a3a; letter-spacing: 0; }
.formula > div:not(.grip) { height: 26px; background: #fdfdfd; border: 1px solid #c6c6c6; display: flex; align-items: center; }
.formula .namebox { width: 102px; justify-content: space-between; padding: 0 5px 0 6px; }
.grip { width: 2px; height: 10px; background: repeating-linear-gradient(#aaa 0 2px, transparent 2px 4px); }
.formula .grip { margin: 8px 14px 0; }
.fx { width: 110px; padding-left: 12px; gap: 23px; }
.fx span { font: bold 12px "Liberation Serif", serif; font-style: italic; color: #555; }
.fx em { font-size: 15px; }
.value { flex: 1; margin-left: 3px; padding: 0 3px 0 11px; justify-content: space-between; font-size: 13px; }

/* worksheet */
.work { height: 737px; display: flex; }
.vscroll { width: 21px; padding: 1px 0 0 3px; display: flex; flex-direction: column; }
.sbtn { width: 15px; height: 15px; flex: none; background: #fff; border: 1px solid #b4b4b4; display: flex; align-items: center; justify-content: center; }
.vscroll .caret { width: 7px; height: 4px; background: #666; }
.vscroll .thumb { width: 15px; height: 682px; background: #fff; border: 1px solid #b4b4b4; }
.vscroll .track { width: 15px; height: 25px; background: #dadada; }
.sheet { width: 1258px; }
.heads, .cols { display: grid; grid-template-columns: 35px repeat(6, 64px) 156px 251px 151px repeat(4, 64px) 24px; }
.heads { height: 19px; margin-left: 1px; border-bottom: 1px solid #9b9b9b; color: #111; font-size: 12.500px; text-align: center; line-height: 19px; letter-spacing: 0; }
.heads span { padding-left: 1px; border-right: 1px solid; border-image: linear-gradient(#d8d8d8, #9b9b9b) 1; }
.heads .cut { text-align: left; padding-left: 0; text-indent: -1px; }
.corner { margin: 4px 0 0 3px; }
.cells { height: 718px; display: grid; border-left: 1px solid #9b9b9b; overflow: hidden; background: linear-gradient(#fff, #fff) 0 0 / 1233px 100% no-repeat #e6e6e6; }
.cols, .rows, .report { grid-area: 1 / 1; }
.cols i { border-right: 1px solid #d4d4d4; }
.cols .last { border-color: #9b9b9b; }
.rows div { height: 20px; border-bottom: 1px solid; border-image: linear-gradient(to right, #d4d4d4 1232px, #ababab 1232px) 1; display: flex; justify-content: flex-end; align-items: flex-end; overflow: hidden; }
.rows b { width: 24px; height: 18px; padding: 1px 0 0 3px; text-align: center; font-weight: normal; font-size: 12.500px; line-height: 17px; color: #111; }
.rows .h11 { height: 11px; } .rows .h21 { height: 21px; } .rows .h28 { height: 28px; } .rows .h29 { height: 29px; }
.rows .h30 { height: 30px; } .rows .h31 { height: 31px; } .rows .h37 { height: 37px; }
.rows .part { height: 8px; border: 0; align-items: flex-start; }

.report { width: 561px; height: 422px; margin: 149px 0 0 417px; border: 3px double #44546a; background: #d6dce4; color: #000; font-weight: bold; font-size: 18.500px; letter-spacing: 0; display: grid; grid-template-columns: 155px 251px 149px; grid-template-rows: 37px 28px 30px 30px repeat(7, 28px) 30px 31px 34px; }
.report div { border: 0 solid #44546a; border-width: 0 1px 1px 0; padding-right: 1px; display: flex; align-items: center; justify-content: center; }
.report .dbl { border-bottom: 3px double #44546a; }
.report .end { border-right: 0; padding-right: 0; }
.report .all { grid-column: span 3; border-right: 0; }
.report .two { grid-column: span 2; }
.report .foot { border-bottom: 0; }
.report .red { color: #f00; }
.report .date { font-size: 18.800px; letter-spacing: 0.45px; }
.report [lang="ar"] { font-family: "Noto Sans Arabic", "DejaVu Sans", sans-serif; font-size: 17px; font-weight: 600; padding-bottom: 1px; }

/* sheet tabs */
.sheetbar { height: 28px; display: flex; align-items: flex-start; margin-left: 21px; border-top: 1px solid #9b9b9b; }
.hscroll { display: flex; width: 558px; padding-top: 6px; }
.hscroll .track { width: 41px; height: 15px; background: #dadada; }
.hscroll .thumb { width: 488px; height: 15px; background: #fff; border: 1px solid #b4b4b4; margin-right: -1px; }
.tri { width: 4px; height: 8px; background: #666; }
.tri.left { clip-path: polygon(100% 0, 100% 100%, 0 50%); }
.tri.right { clip-path: polygon(0 0, 0 100%, 100% 50%); }
.sheetbar .grip { margin: 8px 0 0 15px; }
.add { margin: 5px 35px 0 79px; }
.sheets { display: flex; margin-top: -1px; }
.sheets span { width: 64px; height: 20px; margin-top: 4px; line-height: 19px; text-align: center; border-left: 1px solid #9b9b9b; padding-left: 2px; letter-spacing: 0; }
.sheets .under-tray { width: 65px; padding-left: 5px; }
.sheets .current { width: 68px; height: 25px; margin-top: 0; padding: 4px 0 0 5px; background: #fff; color: #217346; font-weight: bold; border-right: 1px solid #9b9b9b; border-bottom: 3px solid #217346; letter-spacing: -0.3px; }
.dots { font-weight: bold; color: #217346; width: 39px; padding: 4px 0 0 8px; font-size: 14px; letter-spacing: 0; }
.tri.dim { background: #c4c4c4; margin-top: 9px; }
.tri.green { background: #217346; width: 5px; margin: 9px 0 0 24px; }

.status { height: 22px; background: #f1f1f1; border-top: 1px solid #c3c3c3; display: flex; align-items: center; }
.ready { width: 51px; margin-left: 7px; }
.view { width: 38px; height: 21px; margin-left: 914px; background: #c8c8c8; display: flex; align-items: center; justify-content: center; }
.zoom { width: 62px; height: 1px; background: #999; margin-left: 129px; }
.zoom i { display: block; width: 4px; height: 11px; margin: -5px 0 0 10px; background: #666; }
.plus { margin: 0 15px 0 4px; }
.percent { letter-spacing: -0.6px; word-spacing: 1px; }

/* taskbar */
.taskbar { height: 39px; background: #101010; display: flex; color: #fff; letter-spacing: 0; }
.start { width: 48px; display: flex; align-items: center; justify-content: center; }
.search { width: 288px; background: #3f3f3f; border: 1px solid #666; border-bottom: 0; display: flex; align-items: center; padding-left: 11px; color: #e0e0e0; font-size: 14.500px; letter-spacing: -0.25px; }
.search span { width: 171px; margin-left: 11px; }
.castle { align-self: flex-start; }
.apps { display: flex; padding-left: 3px; gap: 9px; }
.apps div { width: 40px; height: 39px; display: flex; align-items: center; justify-content: center; }
.apps div:first-child { margin-left: 4px; }
.apps .open { border-bottom: 1px solid #76b9ed; }
.tray { display: flex; align-items: center; margin-left: auto; width: 243px; }
.chev { margin: 0 10px 0 26px; }
.lang { width: 37px; padding-left: 9px; letter-spacing: -0.4px; }
.clock { width: 62px; display: flex; flex-direction: column; align-items: center; line-height: 17px; font-size: 12px; letter-spacing: -0.6px; font-family: "Open Sans", "Noto Sans Arabic", "DejaVu Sans", sans-serif; padding: 0 0 2px 4px; }
.day { font-size: 9px; letter-spacing: -1.1px; }
.note { position: relative; margin-left: 15px; }
.badge { position: absolute; left: 7px; top: 8px; width: 16px; height: 16px; border-radius: 50%; background: #2b2b2b; border: 1px solid #888; font: 12px/13px "DejaVu Sans", sans-serif; text-align: center; }

/* things on top of the window */
.popup { position: absolute; left: 1032px; top: 904px; width: 120px; height: 80px; background: #262626; box-shadow: 0 0 14px rgba(0, 0, 0, 0.5); display: grid; grid-template-columns: repeat(3, 40px); grid-template-rows: 40px 40px; place-items: center; clip-path: inset(-20px -20px 0 -20px); }
.popup .hover { width: 38px; height: 38px; background: #444; display: grid; place-items: center; }
.activate { position: absolute; left: 991px; top: 893px; display: flex; flex-direction: column; color: rgba(150, 150, 150, 0.7); letter-spacing: 0; font-size: 14px; line-height: 20px; }
.activate strong { font-weight: normal; font-size: 19.500px; line-height: 24px; letter-spacing: -0.2px; }
.activate span { letter-spacing: 0.2px; padding-top: 1px; }
.mark { position: absolute; left: 562px; top: 928px; width: 155px; color: rgba(150, 150, 150, 0.6); }
.mark-ar { display: block; width: 187px; height: 47px; font: bold 52px/50px "DejaVu Sans", sans-serif; color: rgba(200, 200, 200, 0.7); transform: scaleX(0.83); transform-origin: 0 0; }
.mark-en { display: block; font-size: 23.800px; font-weight: bold; line-height: 28px; letter-spacing: 0; text-align: center; }
```
